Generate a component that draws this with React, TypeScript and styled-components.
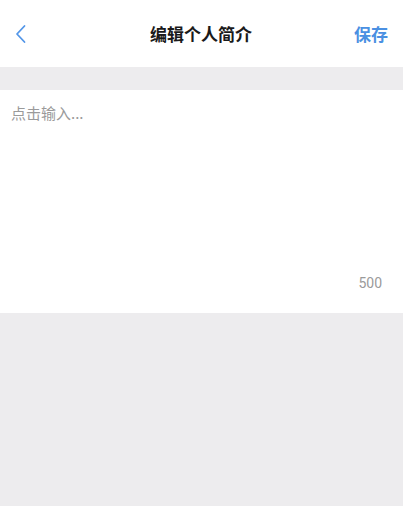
import React from "react";
import styled, { createGlobalStyle } from "styled-components";

const GlobalStyle = createGlobalStyle`
  html, body {
    margin: 0;
    padding: 0;
    height: 100%;
    background: #edecee;
    font-family: "Noto Sans CJK SC", "Noto Sans", sans-serif;
  }
  #root {
    min-height: 100%;
  }
`;

const Page = styled.div`
  display: flex;
  flex-direction: column;
  min-height: 506px;
  background: #edecee;
`;

const NavBar = styled.header`
  height: 67px;
  background: #fff;
  display: grid;
  grid-template-columns: 80px 1fr 80px;
  align-items: center;
  padding: 0 15px 0 14px;
  box-sizing: border-box;
`;

const BackButton = styled.button`
  justify-self: start;
  border: none;
  background: none;
  padding: 0;
  display: flex;
  align-items: center;
  cursor: pointer;
`;

const Title = styled.h1`
  margin: 0;
  text-align: center;
  font-size: 17px;
  font-weight: 700;
  color: #1a1a1a;
`;

const SaveButton = styled.button`
  justify-self: end;
  border: none;
  background: none;
  padding: 0;
  font-family: inherit;
  font-size: 17px;
  font-weight: 700;
  color: #4a90e2;
  cursor: pointer;
`;

const Spacer = styled.div`
  height: 23px;
`;

const Editor = styled.div`
  background: #fff;
  height: 223px;
  display: flex;
  flex-direction: column;
  padding: 12px 21px 22px 11px;
  box-sizing: border-box;
`;

const TextArea = styled.textarea`
  flex: 1;
  border: none;
  outline: none;
  resize: none;
  padding: 0;
  font-family: inherit;
  font-size: 15px;
  line-height: 22px;
  color: #333;
  background: transparent;

  &::placeholder {
    color: #9a9a9a;
  }
`;

const Counter = styled.span`
  align-self: flex-end;
  font-family: Roboto, "Noto Sans", sans-serif;
  font-size: 14px;
  line-height: 16px;
  color: #9a9a9a;
`;

const ChevronLeft = () => (
  <svg width="14" height="20" viewBox="0 0 14 20" fill="none">
    <path d="M10.5 2L3 10l7.5 8" stroke="#5396e8" strokeWidth="1.8" strokeLinecap="round" strokeLinejoin="round" />
  </svg>
);

const MAX = 500;

export default function App() {
  const [text, setText] = React.useState("");
  return (
    <>
      <GlobalStyle />
      <Page>
        <NavBar>
          <BackButton aria-label="返回">
            <ChevronLeft />
          </BackButton>
          <Title>编辑个人简介</Title>
          <SaveButton>保存</SaveButton>
        </NavBar>
        <Spacer />
        <Editor>
          <TextArea
            placeholder="点击输入..."
            maxLength={MAX}
            value={text}
            onChange={(e) => setText(e.target.value)}
          />
          <Counter>{MAX - text.length}</Counter>
        </Editor>
      </Page>
    </>
  );
}
